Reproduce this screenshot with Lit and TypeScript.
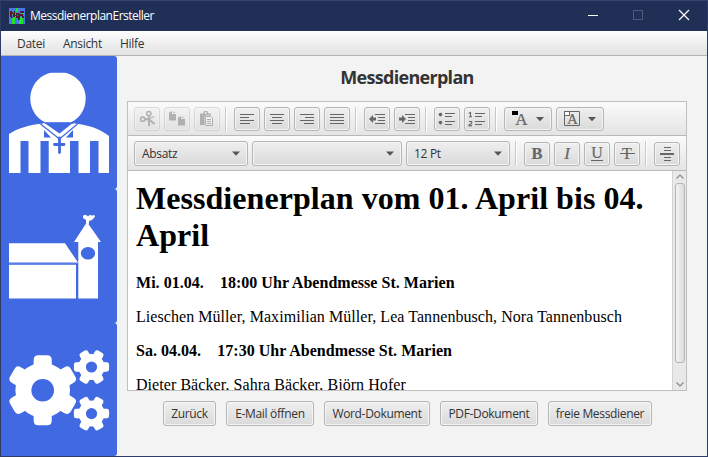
import { LitElement, html, svg, css } from "lit";
import { customElement, property } from "lit/decorators.js";

const G = "#666";

const lines = (rows: number[][]) =>
  svg`${rows.map(([x, y, w]) => svg`<rect x=${x} y=${y} width=${w} height="1" fill=${G} />`)}`;

const glyph = (x: number, y: number, size: number, text: string, style = "") =>
  svg`<text x=${x} y=${y} font-size=${size} font-weight=${style === "b" ? 700 : 400} font-style=${style === "i" ? "italic" : "normal"} text-anchor="middle" fill=${G} stroke=${G} stroke-width="0.2" font-family="Liberation Serif, serif">${text}</text>`;

const icons: Record<string, unknown> = {
  cut: svg`<g fill="none" stroke=${G} stroke-width="1.6"><circle cx="8.7" cy="12.2" r="2.1"/><circle cx="14.8" cy="6.6" r="2.1"/><path d="M10.8 12.2L14.5 12L20.5 17M14.8 8.7V12L15.2 19" stroke-width="2"/><path d="M14.5 12L20 9.5" stroke-width="1.3"/></g>`,
  copy: svg`<path fill=${G} d="M5 5.5L8 4V7H12V13.5H5ZM14 10.5L17 9V12H21V18.5H14ZM9 4.5L11.5 6H9ZM18 9.5L20.5 11H18Z"/>`,
  paste: svg`<path fill=${G} d="M6 6.5H9L10 4H13.5L14.5 6.5H17V8.5H12L10.5 10V18H6Z"/><path fill="#eee" stroke=${G} d="M11.5 9.5H17L18.5 11V18.5H11.5Z"/><path stroke=${G} d="M13 12.5H17M13 14.5H17M13 16.5H17"/><circle cx="11.8" cy="6" r="1" fill="#eee"/>`,
  left: lines([[6, 7, 14], [6, 10, 9], [6, 13, 14], [6, 16, 10]]),
  center: lines([[6, 7, 14], [8, 10, 10], [6, 13, 14], [8, 16, 10]]),
  right: lines([[6, 7, 14], [11, 10, 9], [6, 13, 14], [10, 16, 10]]),
  justify: lines([[6, 7, 14], [6, 10, 14], [6, 13, 14], [6, 16, 14]]),
  outdent: svg`${lines([[11, 7, 10], [14, 10, 7], [14, 13, 7], [11, 16, 10]])}<path fill=${G} d="M5 12L9 8V10.5H12V13.5H9V16Z"/>`,
  indent: svg`${lines([[11, 7, 10], [14, 10, 7], [14, 13, 7], [11, 16, 10]])}<path fill=${G} d="M12 12L8 8V10.5H5V13.5H8V16Z"/>`,
  bullets: svg`${lines([[11, 6, 10], [11, 9, 7], [11, 14, 10], [11, 17, 7]])}<circle cx="6.5" cy="7.6" r="1.8" fill=${G}/><circle cx="6.5" cy="15.6" r="1.8" fill=${G}/>`,
  numbers: svg`${lines([[11, 6, 10], [11, 9, 7], [11, 14, 10], [11, 17, 7]])}<path fill="none" stroke=${G} stroke-width="1.1" d="M4.8 6.3L6.5 5.5V10M5 9.8H8M5 14.5H7.7V16.3L5 18V18.6H8"/>`,
  fore: svg`${glyph(17.5, 18, 17, "A")}<rect x="8" y="4" width="6" height="4" fill="#000"/>`,
  back: svg`<path fill="none" stroke=${G} d="M14 4.5H23.5V18.5H8.5V9"/>${glyph(16.5, 17, 15, "A")}<rect x="8.5" y="4.5" width="5" height="4" fill="#fff" stroke=${G}/>`,
  bold: glyph(13, 17, 16.5, "B", "b"),
  italic: glyph(13, 17, 17, "I", "i"),
  underline: svg`${glyph(13, 16, 16, "U")}<rect x="7" y="18" width="12" height="1" fill=${G}/>`,
  strike: svg`${glyph(13, 17, 16, "T")}<rect x="6" y="11" width="15" height="1" fill=${G}/>`,
  rule: svg`${lines([[10, 5, 7], [10, 8, 7], [10, 15, 7], [10, 18, 7]])}<rect x="6" y="11" width="14" height="2" fill=${G}/>`,
};

@customElement("tool-button")
class ToolButton extends LitElement {
  @property() icon = "";
  @property({ type: Boolean, reflect: true }) wide = false;
  @property({ type: Boolean, reflect: true }) disabled = false;
  static styles = css`
    :host { display: block; width: 26px; height: 24px; box-sizing: border-box; flex: none;
      border: 1px solid #b5b5b5; border-radius: 3px;
      background: linear-gradient(#efefef, #dadada); box-shadow: inset 0 0 0 1px #f5f5f5; }
    :host([wide]) { width: 48px; }
    :host([disabled]) { opacity: 0.45; }
    svg { display: block; margin: -1px; overflow: visible; }
  `;
  render() {
    const w = this.wide ? 48 : 26;
    return html`<svg width=${w} height="24" viewBox="0 0 ${w} 24">
      ${icons[this.icon]}
      ${this.wide ? svg`<path d="M32 10H40L36 14.2Z" fill="#555"/>` : ""}
    </svg>`;
  }
}

const teeth = (cx: number, cy: number, r: number, hole: number, tw: number, th: number, c: number, start: number) => svg`
  <g fill="#fff" transform="translate(${cx} ${cy})">
    ${[0, 60, 120, 180, 240, 300].map((a) => svg`<path transform="rotate(${a + start})"
      d="M${-tw * 0.54} 0L${-tw * 0.5} ${-th + c}Q${-tw * 0.5} ${-th} ${-tw * 0.5 + c} ${-th}H${tw * 0.5 - c}Q${tw * 0.5} ${-th} ${tw * 0.5} ${-th + c}L${tw * 0.54} 0Z"/>`)}
    <circle r=${r}/><circle r=${hole} fill="#4169e1"/>
  </g>`;

@customElement("app-root")
class AppRoot extends LitElement {
  static styles = css`
    :host { display: flex; flex-direction: column; box-sizing: border-box; width: 708px; height: 457px;
      border: 1px solid #2c3c66; border-top-color: #34456b; background: #f3f3f3; overflow: hidden;
      font: 12px/16px "Open Sans", "Noto Sans", sans-serif; color: #333; }
    svg { display: block; flex: none; }
    .title { height: 30px; flex: none; display: flex; align-items: center; gap: 5px; padding-left: 8px; background: #202f56; color: #fff; }
    .title span { flex: 1; letter-spacing: -0.5px; white-space: nowrap; }
    .title .controls { margin-right: 1px; }
    .menu { height: 25px; flex: none; box-sizing: border-box; display: flex; gap: 18px; padding: 5px 16px 0;
      border-bottom: 1px solid #b4b4b4; background: linear-gradient(#fdfdfd, #e2e2e2); letter-spacing: -0.3px; }
    .body { flex: 1; display: flex; min-height: 0; }
    .side { width: 116px; flex: none; display: flex; flex-direction: column; }
    .tile { background: #4169e1; border-radius: 0 3px 3px 0; overflow: hidden; }
    .main { flex: 1; padding: 0 20px 0 10px; display: flex; flex-direction: column; }
    h2 { margin: 9px 0 12px; height: 24px; text-align: center; font-size: 18px; line-height: 24px; font-weight: 700; letter-spacing: -0.7px; }
    .editor { height: 290px; box-sizing: border-box; border: 1px solid #c0c0c0; background: #fff; display: flex; flex-direction: column; }
    .bar { height: 34px; flex: none; box-sizing: border-box; display: flex; align-items: center; gap: 4px; padding: 1px 0 0 6px;
      border-bottom: 1px solid #b9b9b9; background: linear-gradient(#fbfbfb, #e4e4e4); }
    .bar.second { height: 35px; }
    .bar.second tool-button { margin-top: 1px; }
    .sep { width: 1px; height: 25px; background: #c8c8c8; margin: 0 4px 0 1px; box-shadow: 1px 0 #fff; }
    .combo { height: 25px; box-sizing: border-box; flex: none; display: flex; align-items: center; justify-content: space-between;
      padding: 0 7px; border: 1px solid #b5b5b5; border-radius: 3px; background: linear-gradient(#efefef, #dadada);
      box-shadow: inset 0 0 0 1px #f5f5f5; letter-spacing: -0.3px; }
    .format { width: 114px; } .family { width: 150px; } .size { width: 104px; }
    .view { flex: 1; display: flex; min-height: 0; }
    .doc { flex: 1; overflow: hidden; padding: 9px 8px 0; font: 16px/18px "Liberation Serif", serif; color: #000; }
    .doc h1 { margin: 0 0 20px; font-size: 32px; line-height: 37px; letter-spacing: 0.05px; }
    .doc p { margin: 0 0 16px; white-space: pre; letter-spacing: 0.058px; }
    .doc b { letter-spacing: 0.025px; }
    .scroll { width: 14px; flex: none; box-sizing: border-box; border-left: 1px solid #d4d4d4; background: #e9e9e9;
      display: flex; flex-direction: column; align-items: center; }
    .thumb { width: 10px; height: 180px; box-sizing: border-box; border: 1px solid #b5b5b5; border-radius: 3px;
      background: linear-gradient(90deg, #f3f3f3, #dcdcdc); }
    .space { flex: 1; }
    .actions { display: flex; gap: 10px; padding: 10px 0 0 36px; }
    .action { height: 25px; box-sizing: border-box; border: 1px solid #b5b5b5; border-radius: 3px; line-height: 23px; text-align: center;
      background: linear-gradient(#efefef, #dadada); box-shadow: inset 0 0 0 1px #f5f5f5; letter-spacing: -0.33px; white-space: nowrap; flex: none; }
  `;

  arrow = html`<svg width="8" height="5"><path d="M0 0.5H8L4 4.7Z" fill="#555"/></svg>`;

  render() {
    const sep = html`<div class="sep"></div>`;
    const tools = (names: string[]) => names.map((n) => html`<tool-button icon=${n}></tool-button>`);
    return html`
      <div class="title">
        <svg width="16" height="16" shape-rendering="crispEdges">
          <rect width="16" height="16" fill="#4778e8"/>
          <path fill="#20e820" d="M3 9H6V16H3ZM7 0H9V4H7ZM10 9H14V16H10ZM1 5H4V7H1ZM6 6H8V9H6ZM12 4H15V6H12Z"/>
          <path fill="#5c1530" d="M1 3H3V9H1ZM3 4H4V6H3ZM4 5H6V9H4ZM7 5H10V7H7ZM7 8H11V10H7ZM11 3H15V5H11ZM11 6H14V8H11ZM13 8H15V10H13Z"/>
          <path fill="#10402c" d="M5 3H6V5H5ZM6 7H8V8H6ZM9 6H11V8H9ZM2 9H4V10H2ZM9 10H11V12H9Z"/>
        </svg>
        <span>MessdienerplanErsteller</span>
        <svg class="controls" width="120" height="30">
          <path d="M2 14.5H12" stroke="#fff"/>
          <rect x="47.5" y="9.5" width="9" height="9" fill="none" stroke="#4d5a7a"/>
          <path d="M93 9L103 19M103 9L93 19" stroke="#fff" stroke-width="1.2"/>
        </svg>
      </div>
      <div class="menu"><span>Datei</span><span>Ansicht</span><span>Hilfe</span></div>
      <div class="body">
        <div class="side">
          <div class="tile"><svg width="116" height="133" viewBox="1 56 116 133">
            <path fill="#fff" d="M51 72.7H65C77 75 85.7 86 85.7 98.5C85.7 109 80 118 71 122.3H45C36 118 30.3 109 30.3 98.5C30.3 86 39 75 51 72.7Z"/>
            <path fill="#fff" d="M9 134C18 128 29 125 41 123.7H76C88 125 100 128.5 109 136V173H98.5V141H90V173H78.5V141H70V173H48.7V141H40.5V173H28.5V141H20.5V173H9Z"/>
            <path fill="#4169e1" d="M44 122.8H73L59.5 133.5ZM44 130L51 137.5H44ZM73 130L66 137.5H73Z"/>
            <path fill="none" stroke="#4169e1" stroke-width="1.3" d="M40.5 124L59.5 139L77.5 124"/>
            <path fill="none" stroke="#fff" stroke-width="1.6" d="M43 123.5L59.5 136L75 123.5"/>
            <path fill="none" stroke="#4169e1" stroke-width="2.8" stroke-linecap="round" d="M59.5 138V152.5M54.5 144.5H64"/>
          </svg></div>
          <div class="tile"><svg width="116" height="134" viewBox="1 189 116 134">
            <path fill="#fff" d="M9 243.2H65L78 262.5H9ZM9 264.8H76V298.5H9ZM78.3 242H74L87 222L101 242H98V298.5H78.3Z"/>
            <path fill="#a9bbf3" d="M9 262.3H78V263.3H9Z"/>
            <path fill="#fff" d="M86 223V220L83 218V215.5L86 214.7L88 216.5L90 214.7L92 215.8L94 214.7L95 216.8L92 220L89 221V224Z"/>
            <ellipse cx="88" cy="253.3" rx="7.1" ry="6.3" fill="#4169e1"/>
          </svg></div>
          <div class="tile"><svg width="116" height="133" viewBox="1 323 116 133">
            ${teeth(42.7, 390.2, 27.3, 11.3, 18, 35, 4.5, 0)}
            ${teeth(91.5, 367, 13, 5.6, 9.5, 17.6, 2.4, 30)}
            ${teeth(91.5, 413.6, 13, 5.6, 9.5, 17.6, 2.4, 30)}
          </svg></div>
        </div>
        <div class="main">
          <h2>Messdienerplan</h2>
          <div class="editor">
            <div class="bar">
              ${["cut", "copy", "paste"].map((n) => html`<tool-button icon=${n} disabled></tool-button>`)}
              ${sep}${tools(["left", "center", "right", "justify"])}
              ${sep}${tools(["outdent", "indent"])}
              ${sep}${tools(["bullets", "numbers"])}
              ${sep}<tool-button icon="fore" wide></tool-button><tool-button icon="back" wide></tool-button>
            </div>
            <div class="bar second">
              <div class="combo format"><span>Absatz</span>${this.arrow}</div>
              <div class="combo family"><span></span>${this.arrow}</div>
              <div class="combo size"><span>12 Pt</span>${this.arrow}</div>
              ${sep}${tools(["bold", "italic", "underline", "strike"])}
              ${sep}${tools(["rule"])}
            </div>
            <div class="view">
              <div class="doc">
                <h1>Messdienerplan vom 01. April bis 04. April</h1>
                <p><b>Mi. 01.04.    18:00 Uhr Abendmesse St. Marien</b></p>
                <p>Lieschen Müller, Maximilian Müller, Lea Tannenbusch, Nora Tannenbusch</p>
                <p><b>Sa. 04.04.    17:30 Uhr Abendmesse St. Marien</b></p>
                <p>Dieter Bäcker, Sahra Bäcker, Björn Hofer</p>
              </div>
              <div class="scroll">
                <svg width="10" height="12"><path d="M1.5 7.5L5 4L8.5 7.5" fill="none" stroke="#888" stroke-width="1.2"/></svg>
                <div class="thumb"></div>
                <div class="space"></div>
                <svg width="10" height="12"><path d="M1.5 4.5L5 8L8.5 4.5" fill="none" stroke="#888" stroke-width="1.2"/></svg>
              </div>
            </div>
          </div>
          <div class="actions">
            ${([["Zurück", 53], ["E-Mail öffnen", 88], ["Word-Dokument", 106], ["PDF-Dokument", 98], ["freie Messdiener", 104]] as [string, number][]).map(
              ([t, w]) => html`<div class="action" style="width:${w}px">${t}</div>`)}
          </div>
        </div>
      </div>
    `;
  }
}
